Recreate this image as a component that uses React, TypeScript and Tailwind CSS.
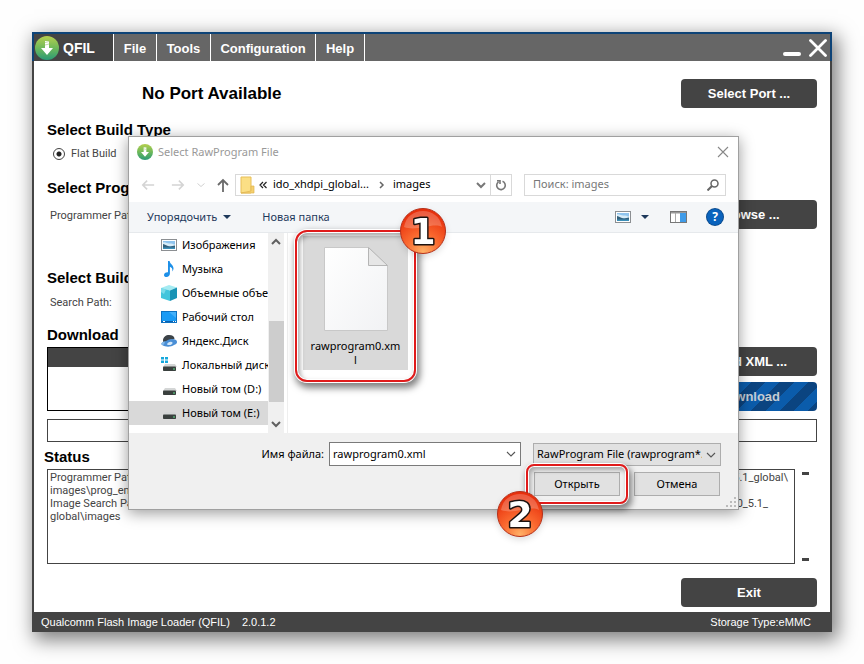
import React, { useState } from 'react';

const DialogArrow: React.FC<{ path: string; color: string; size: number }> = ({ path, color, size }) => (
  <svg width={size} height={size} viewBox="0 0 16 16" fill="none" stroke={color} strokeWidth="1.8">
    <path d={path} />
  </svg>
);

const AppLogo: React.FC<{ size: number; id: string }> = ({ size, id }) => (
  <svg width={size} height={size} viewBox="0 0 24 24" className="shrink-0">
    <defs>
      <linearGradient id={id} x1="0" y1="0" x2="0" y2="1">
        <stop offset="0" stopColor="#b5cf4e" />
        <stop offset="0.5" stopColor="#6fb95a" />
        <stop offset="1" stopColor="#2a9a76" />
      </linearGradient>
    </defs>
    <circle cx="12" cy="12" r="12" fill={`url(#${id})`} />
    <path d="M10 5h4v7h4l-6 7-6-7h4z" fill="#fff" />
    <path d="M10 6.5l4-1M10 9l4-1" stroke="#a6cc80" strokeWidth="0.7" />
  </svg>
);

const Chevron: React.FC<{ color?: string; bold?: boolean }> = ({ color = '#555', bold }) => (
  <svg width="10" height="10" viewBox="0 0 10 10" fill="none" stroke={color} strokeWidth={bold ? 2 : 1.1}>
    <path d="M1 3l4 4 4-4" />
  </svg>
);

const PictureIcon: React.FC = () => (
  <svg width="16" height="16" viewBox="0 0 16 16">
    <rect x="0.5" y="2.5" width="15" height="11" fill="#fff" stroke="#8c8f92" />
    <rect x="2" y="4" width="12" height="8" fill="#8fc4ee" />
    <path d="M2 5.5c3-1 4 1.5 7 1s3 1 5 1V9H2z" fill="#d7ecf8" />
    <path d="M2 7c2 0 4 2.5 7 2.5 2 0 3-1 5-1V12H2z" fill="#33617c" />
    <path d="M2 10.5h12V12H2z" fill="#3c8fb8" />
  </svg>
);

const MusicIcon: React.FC = () => (
  <svg width="16" height="16" viewBox="0 0 16 16" fill="#1e90e8">
    <path d="M7 0h1.6c.3 3 3.9 4 3.9 7.3 0 1.2-.5 2.4-1.3 3.2.7-2.7-.6-4-2.3-4.7v6.800C8.900 14.700 7.300 16 5.500 16 4 16 3 15.200 3 13.900c0-1.600 1.700-2.900 4-2.700z" />
  </svg>
);

const CubeIcon: React.FC = () => (
  <svg width="16" height="16" viewBox="0 0 16 16">
    <path d="M0 3l8-3 8 2.5-7 3z" fill="#a5ebf2" />
    <path d="M0 3l9 2.5V16l-9-3z" fill="#43c5dc" />
    <path d="M9 5.5l7-3V13l-7 3z" fill="#1893b5" />
    <path d="M0 3l5 1.4L3 9l-3-2z" fill="#7cdcea" />
  </svg>
);

const DesktopIcon: React.FC = () => (
  <svg width="16" height="16" viewBox="0 0 16 16">
    <rect x="0.5" y="2.5" width="15" height="11" fill="#1a9bf5" stroke="#0d72c2" />
    <path d="M8 3h7v6z" fill="#43b0fa" />
    <path d="M1 12.5h14" stroke="#0a5fae" />
    <path d="M2 12.5h2M12 12.5h1M14 12.5h1" stroke="#fff" />
  </svg>
);

const YandexIcon: React.FC = () => (
  <svg width="16" height="16" viewBox="0 0 16 16">
    <path d="M2 7.5c0-3.5 3-5.5 6-5.5 3.5 0 5.5 1.5 5.5 4l-5 1-6 3z" fill="#3c4348" />
    <path d="M1 12c-2-2 1-3 4-4 3-2 7-3 10-1 2 2 1 4-2 5-3 2-8 2.5-12 0z" fill="#4a8fd6" />
    <path d="M6 11.5C6.500 9 10.500 8 11.500 9.500c.5 2-3 3.500-5.500 2z" fill="#d5e8f9" />
    <path d="M1 12c-2-2 1-3 3-3.500l-1 3z" fill="#83b9ea" />
  </svg>
);

const DriveIcon: React.FC<{ system?: boolean }> = ({ system }) => (
  <svg width="16" height="16" viewBox="0 0 16 16">
    {system && <path d="M0 0h3v2.500H0zM4 0h3v2.500H4zM0 3.500h3V6H0zM4 3.500h3V6H4z" fill="#16a8dc" />}
    <path d="M4 7h10l2 3H2z" fill="#d4d6d6" />
    <rect x="2" y="9.5" width="13" height="4.5" rx="0.8" fill="#3a403e" />
    <rect x="12" y="11.5" width="2" height="1" fill="#5fe08a" />
  </svg>
);

const folders = [
  { name: 'Изображения', icon: <PictureIcon /> },
  { name: 'Музыка', icon: <MusicIcon /> },
  { name: 'Объемные объекты', icon: <CubeIcon /> },
  { name: 'Рабочий стол', icon: <DesktopIcon /> },
  { name: 'Яндекс.Диск', icon: <YandexIcon /> },
  { name: 'Локальный диск', icon: <DriveIcon system /> },
  { name: 'Новый том (D:)', icon: <DriveIcon /> },
  { name: 'Новый том (E:)', icon: <DriveIcon />, selected: true },
];

const Badge: React.FC<{ value: string; id: string }> = ({ value, id }) => (
  <svg width="48" height="48" viewBox="0 0 48 48" className="drop-shadow-md">
    <defs>
      <radialGradient id={id} cx="0.5" cy="0.95" r="0.85">
        <stop offset="0" stopColor="#ffb066" />
        <stop offset="0.45" stopColor="#fa6a30" />
        <stop offset="1" stopColor="#e8300c" />
      </radialGradient>
    </defs>
    <circle cx="24" cy="24" r="22.5" fill={`url(#${id})`} stroke="#b5301a" />
    <path d="M5 20C7 9 15 4 24 4s17 5 19 16c-9-5-25 5-38 0z" fill="#fff" opacity="0.22" />
    <text
      x="24"
      y="37"
      textAnchor="middle"
      className="font-['DejaVu_Sans',sans-serif] text-[36px] font-bold"
      fill="#fff"
      stroke="#1c1210"
      strokeWidth="3"
      strokeLinejoin="round"
      paintOrder="stroke"
    >
      {value}
    </text>
  </svg>
);

const DarkButton: React.FC<{ children: React.ReactNode }> = ({ children }) => (
  <button className="h-[29px] w-[136px] shrink-0 rounded bg-[#444] text-[13px] font-bold text-white">{children}</button>
);

const Heading: React.FC<{ children: React.ReactNode; className?: string }> = ({ children, className }) => (
  <h2 className={`text-[15px] leading-5 font-bold text-black ${className ?? ''}`}>{children}</h2>
);

const FileDialog: React.FC = () => {
  const [fileName, setFileName] = useState('rawprogram0.xml');

  return (
    <div
      role="dialog"
      aria-label="Select RawProgram File"
      className="absolute top-[104px] right-[93px] left-24 border border-[#a0a0a0] bg-white font-['Noto_Sans',sans-serif] text-[11px] text-black shadow-[0_3px_14px_rgba(0,0,0,0.4)]"
    >
      {/* Title bar */}
      <div className="flex h-[30px] items-center gap-[5px] pr-[9px] pl-2 text-[#999]">
        <AppLogo size={16} id="logo-small" />
        <span className="flex-1">Select RawProgram File</span>
        <button aria-label="Close">
          <svg width="12" height="12" viewBox="0 0 12 12" stroke="#888" strokeWidth="1.1">
            <path d="M1 1l10 10M11 1L1 11" />
          </svg>
        </button>
      </div>

      {/* Address row */}
      <div className="flex h-[35px] items-center px-3">
        <button aria-label="Back">
          <DialogArrow size={14} color="#d4d4d4" path="M15 8H2M7 3L2 8l5 5" />
        </button>
        <button aria-label="Forward" className="ml-4">
          <DialogArrow size={14} color="#d4d4d4" path="M1 8h13M9 3l5 5-5 5" />
        </button>
        <button aria-label="Recent" className="ml-3">
          <DialogArrow size={8} color="#ccc" path="M1 5l7 6 7-6" />
        </button>
        <button aria-label="Up" className="ml-2.5">
          <DialogArrow size={16} color="#6a6a6a" path="M8 15V3M3 8l5-5 5 5" />
        </button>
        <div className="ml-1 flex h-[22px] flex-1 items-center border border-[#d9d9d9]">
          <svg width="15" height="18" viewBox="0 0 15 18" className="ml-1">
            <path d="M1 1h10v16H1z" fill="#fbdf85" stroke="#e8bf58" />
            <path d="M11 10h3v7H1l10-2z" fill="#f5d06e" stroke="#e0b551" strokeWidth="0.7" />
          </svg>
          <svg width="8" height="8" viewBox="0 0 8 8" className="ml-1" fill="none" stroke="#222" strokeWidth="1.2">
            <path d="M4 1L1 4l3 3M7.500 1l-3 3 3 3" />
          </svg>
          <span className="ml-1.5">ido_xhdpi_global...</span>
          <svg width="6" height="8" viewBox="0 0 6 8" className="ml-2.5" fill="none" stroke="#666" strokeWidth="1.5">
            <path d="M1 1l3 3-3 3" />
          </svg>
          <span className="ml-2 flex-1">images</span>
          <button aria-label="History" className="mr-1">
            <Chevron bold color="#777" />
          </button>
          <button aria-label="Refresh" className="flex h-full w-[21px] items-center justify-center border-l border-[#d9d9d9]">
            <svg width="12" height="12" viewBox="0 0 12 12" fill="none" stroke="#777" strokeWidth="1.6">
              <path d="M7.500 2.300a4.300 4.300 0 1 1-4 .5M2 1.800h3v3.200" />
            </svg>
          </button>
        </div>
        <div className="ml-3 flex h-[22px] w-[202px] items-center border border-[#d9d9d9] pr-1.5 pl-2">
          <input aria-label="Поиск" placeholder="Поиск: images" className="w-0 flex-1 outline-none placeholder:text-[#777]" />
          <svg width="12" height="12" viewBox="0 0 12 12" fill="none" stroke="#666" strokeWidth="1.5">
            <circle cx="7.5" cy="4.5" r="3.5" />
            <path d="M5 7l-4.500 4.500" strokeWidth="2" />
          </svg>
        </div>
      </div>

      {/* Toolbar */}
      <div className="flex h-[31px] items-center border-b border-[#e6e9ec] bg-[#f4f6f8] pr-[15px] pl-[18px] text-[#1e395b]">
        <button className="flex items-center gap-1.5">
          Упорядочить
          <svg width="8" height="4" viewBox="0 0 8 4" fill="#1e395b">
            <path d="M0 0h8L4 4z" />
          </svg>
        </button>
        <button className="ml-[31px]">Новая папка</button>
        <button aria-label="View" className="ml-auto flex items-center gap-2.5">
          <PictureIcon />
          <svg width="8" height="4" viewBox="0 0 8 4" fill="#1e395b">
            <path d="M0 0h8L4 4z" />
          </svg>
        </button>
        <button aria-label="Preview pane" className="ml-[21px]">
          <svg width="17" height="12" viewBox="0 0 17 12">
            <rect x="0.5" y="0.5" width="16" height="11" fill="#fff" stroke="#777" />
            <path d="M1 1h15v1.500H1z" fill="#999" />
            <path d="M5.500 2v9" stroke="#aaa" />
            <rect x="10" y="2" width="6" height="9" fill="#3f9be8" />
          </svg>
        </button>
        <button
          aria-label="Help"
          className="ml-5 flex size-4 items-center justify-center rounded-full bg-[#0a63bd] text-xs font-bold text-white ring-1 ring-[#0b4a8c]"
        >
          ?
        </button>
      </div>

      {/* Folder tree and file list */}
      <div className="flex h-[200px]">
        <ul className="w-[139px] overflow-hidden">
          {folders.map((folder) => (
            <li
              key={folder.name}
              className={`flex h-6 items-center gap-[5px] pl-8 whitespace-nowrap ${folder.selected ? 'bg-[#d9d9d9]' : ''}`}
            >
              <span className="shrink-0">{folder.icon}</span>
              {folder.name}
            </li>
          ))}
        </ul>
        <div className="flex w-4 flex-col items-center bg-[#f0f0f0] pt-1 pb-1">
          <span className="rotate-180">
            <Chevron bold color="#606060" />
          </span>
          <div className="mt-auto mb-[17px] h-[81px] w-[15px] bg-[#cdcdcd]" />
          <Chevron bold color="#606060" />
        </div>
        <div className="ml-[3px] flex-1 border-l border-[#eee] pt-[3px] pl-[15px]">
          <div className="relative h-[134px] w-[105px] bg-[#d9d9d9] pt-[11px] text-center">
            <svg width="64" height="84" viewBox="0 0 64 84" className="mx-auto">
              <defs>
                <linearGradient id="page" x1="0" y1="0" x2="1" y2="1">
                  <stop offset="0" stopColor="#fff" />
                  <stop offset="1" stopColor="#f1f2f4" />
                </linearGradient>
              </defs>
              <path d="M0.500 0.500h44l19 18v65h-63z" fill="url(#page)" stroke="#c8c8c8" />
              <path d="M44.500 0.500v18h19z" fill="#e6e6e6" stroke="#b5b5b5" />
            </svg>
            <p className="mt-2 px-[7px] leading-[14px] break-all">rawprogram0.xml</p>
            <div className="absolute -inset-x-2 -top-1.5 -bottom-3 rounded-xl border-2 border-[#e01b1b] shadow-[0_0_0_1px_#fff,2px_4px_7px_2px_rgba(0,0,0,0.5),inset_0_0_0_1px_#fff,inset_2px_3px_5px_1px_rgba(0,0,0,0.35)]" />
            <div className="absolute -top-[29px] -right-[39px]">
              <Badge value="1" id="badge-one" />
            </div>
          </div>
        </div>
      </div>

      {/* File name and actions */}
      <div className="relative h-[76px] bg-[#f0f0f0] pt-[9px] pr-[17px]">
        <div className="flex items-center">
          <label htmlFor="file-name" className="w-[200px] pr-[5px] text-right">
            Имя файла:
          </label>
          <div className="flex h-6 flex-1 items-center border border-[#7a7a7a] bg-white pr-1 pl-[3px]">
            <input
              id="file-name"
              value={fileName}
              onChange={(e) => setFileName(e.target.value)}
              className="w-0 flex-1 outline-none"
            />
            <Chevron />
          </div>
          <div className="relative ml-3 h-[23px] w-[188px] border border-[#adadad] bg-[#e1e1e1]">
            <select aria-label="File type" className="h-full w-[168px] appearance-none overflow-hidden pl-[3px] outline-none">
              <option>RawProgram File (rawprogram*.xml)</option>
            </select>
            <span className="pointer-events-none absolute top-1.5 right-1">
              <Chevron />
            </span>
          </div>
        </div>
        <div className="mt-1.5 flex justify-end gap-3.5 pr-px">
          <div className="relative">
            <button className="h-6 w-[86px] border border-[#adadad] bg-[#e1e1e1]">Открыть</button>
            <div className="pointer-events-none absolute -inset-x-2 -inset-y-2 rounded-lg border-2 border-[#e01b1b] shadow-[0_0_0_1px_#fff,2px_4px_6px_2px_rgba(0,0,0,0.45),inset_0_0_0_1px_#fff,inset_2px_3px_5px_1px_rgba(0,0,0,0.3)]" />
            <div className="absolute top-[18px] -left-[38px]">
              <Badge value="2" id="badge-two" />
            </div>
          </div>
          <button className="h-6 w-[86px] border border-[#adadad] bg-[#e1e1e1]">Отмена</button>
        </div>
        <svg width="10" height="10" viewBox="0 0 10 10" fill="#bbb" className="absolute right-0.5 bottom-0.5">
          <path d="M8 0h2v2H8zM8 4h2v2H8zM4 4h2v2H4zM0 8h2v2H0zM4 8h2v2H4zM8 8h2v2H8z" />
        </svg>
      </div>
    </div>
  );
};

const App: React.FC = () => {
  return (
    <div className="min-h-screen bg-[#fefefe] p-8 font-['Liberation_Sans',Arial,sans-serif] text-[11px] text-[#444]">
      <div className="relative shadow-[4px_6px_18px_2px_rgba(0,0,0,0.5)]">
        {/* Menu bar */}
        <header className="flex h-[29px] border-2 border-b-0 border-[#0d4377] bg-[#666] text-[13px] font-bold text-white">
          <div className="flex w-[79px] items-center gap-1 bg-[#444] pl-px text-sm">
            <AppLogo size={24} id="logo-large" />
            <span>QFIL</span>
          </div>
          <nav className="flex divide-x divide-white border-x border-white">
            <button className="w-[43px] pt-0.5">File</button>
            <button className="w-[54px] pt-0.5">Tools</button>
            <button className="w-[105px] pt-0.5">Configuration</button>
            <button className="w-[48px] pt-0.5">Help</button>
          </nav>
          <div className="ml-auto flex items-center gap-2 pr-[3px]">
            <button aria-label="Minimize">
              <svg width="18" height="18" viewBox="0 0 18 18" stroke="#fff" strokeWidth="4" strokeLinecap="round">
                <path d="M2 15h14" />
              </svg>
            </button>
            <button aria-label="Exit application">
              <svg width="18" height="18" viewBox="0 0 18 18" stroke="#fff" strokeWidth="2.8" strokeLinecap="round">
                <path d="M1.500 1.500l15 15M16.500 1.500l-15 15" />
              </svg>
            </button>
          </div>
        </header>

        <main className="border-x-2 border-[#444] bg-white px-2.5 pt-[18px] pb-[5px]">
          <div className="px-[3px]">
            <div className="flex items-center justify-between pl-[95px]">
              <h1 className="text-[17px] font-bold text-black">No Port Available</h1>
              <DarkButton>Select Port ...</DarkButton>
            </div>

            {/* Build type */}
            <Heading className="mt-3">Select Build Type</Heading>
            <label className="mt-1 flex h-5 items-center gap-1.5 pl-1.5 font-['Roboto',sans-serif]">
              <input
                type="radio"
                name="build"
                defaultChecked
                className="size-3 appearance-none rounded-full border border-[#444] bg-[radial-gradient(circle,#222_0_2px,#fff_3px)]"
              />
              Flat Build
            </label>

            {/* Programmer */}
            <Heading className="mt-3.5">Select Programmer</Heading>
            <div className="mt-0.5 flex items-center justify-between pl-[3px]">
              <span className="pt-1 font-['Roboto',sans-serif]">Programmer Path</span>
              <DarkButton>Browse ...</DarkButton>
            </div>

            {/* Build */}
            <Heading className="mt-[39px]">Select Build</Heading>
            <div className="mt-1 flex h-[22px] items-center pl-[3px] font-['Roboto',sans-serif]">Search Path:</div>

            {/* Download */}
            <Heading className="mt-[11px]">Download</Heading>
            <div className="mt-0.5 flex gap-2">
              <div className="h-16 flex-1 border border-black">
                <div className="h-[19px] bg-[#444]" />
              </div>
              <div className="flex flex-col gap-1.5">
                <DarkButton>Load XML ...</DarkButton>
                <button className="h-[29px] w-[136px] rounded bg-[repeating-linear-gradient(135deg,#0b5cab_0_10px,#0b4480_10px_20px)] text-[13px] font-bold text-[#c4ccd4]">
                  Download
                </button>
              </div>
            </div>
            <div className="mt-2 h-[23px] border border-[#444]" />
          </div>

          {/* Status */}
          <Heading className="mt-[5px]">Status</Heading>
          <div className="mt-0.5 px-[3px]">
            <div className="flex">
              <div className="h-[95px] flex-1 border border-[#444] pt-px pr-1.5 pl-0.5 font-['Roboto',sans-serif] leading-[13px]">
                <div className="flex justify-between">
                  <span>Programmer Path:</span>
                  <span>5.1_global\</span>
                </div>
                <div>images\prog_em</div>
                <div className="flex justify-between pr-5">
                  <span>Image Search Path:</span>
                  <span>0_5.1_</span>
                </div>
                <div>global\images</div>
              </div>
              <div className="flex w-[22px] flex-col justify-between py-[3px] pl-[7px]">
                <div className="h-[3px] w-[7px] bg-[#444]" />
                <div className="h-[3px] w-[7px] bg-[#444]" />
              </div>
            </div>
            <div className="mt-3.5 flex justify-end">
              <DarkButton>Exit</DarkButton>
            </div>
          </div>
        </main>

        <footer className="flex h-5 items-center bg-[#444] pr-[21px] pl-[9px] text-white">
          <span>Qualcomm Flash Image Loader (QFIL)</span>
          <span className="ml-3">2.0.1.2</span>
          <span className="ml-auto">Storage Type:eMMC</span>
        </footer>

        <FileDialog />
      </div>
    </div>
  );
};

export default App;
